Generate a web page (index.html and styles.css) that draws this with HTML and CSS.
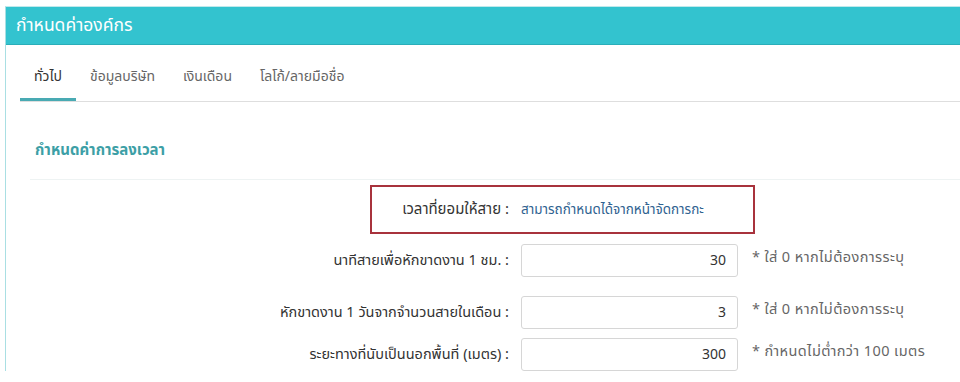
FILE: index.html
```html
<!DOCTYPE html>
<html lang="th">
<head>
<meta charset="utf-8">
<title>กำหนดค่าองค์กร</title>
<link rel="stylesheet" href="styles.css">
</head>
<body>
<div class="panel">
  <div class="panel-head">กำหนดค่าองค์กร</div>
  <div class="panel-body">
    <ul class="tabs">
      <li class="tab active">ทั่วไป</li>
      <li class="tab">ข้อมูลบริษัท</li>
      <li class="tab">เงินเดือน</li>
      <li class="tab">โลโก้/ลายมือชื่อ</li>
    </ul>
    <div class="section-title">กำหนดค่าการลงเวลา</div>
    <div class="form">
      <div class="row row-static">
        <div class="label">เวลาที่ยอมให้สาย :</div>
        <div class="value">สามารถกำหนดได้จากหน้าจัดการกะ</div>
        <div class="annot"></div>
      </div>
      <div class="row row-1">
        <div class="label">นาทีสายเพื่อหักขาดงาน 1 ชม. :</div>
        <div class="input">30</div>
        <div class="hint">* ใส่ 0 หากไม่ต้องการระบุ</div>
      </div>
      <div class="row row-2">
        <div class="label">หักขาดงาน 1 วันจากจำนวนสายในเดือน :</div>
        <div class="input">3</div>
        <div class="hint">* ใส่ 0 หากไม่ต้องการระบุ</div>
      </div>
      <div class="row row-3">
        <div class="label">ระยะทางที่นับเป็นนอกพื้นที่ (เมตร) :</div>
        <div class="input">300</div>
        <div class="hint">* กำหนดไม่ต่ำกว่า 100 เมตร</div>
      </div>
    </div>
  </div>
</div>
</body>
</html>
```

FILE: styles.css
```css
* { box-sizing: border-box; }
html, body {
  margin: 0;
  padding: 0;
  background: #ffffff;
  font-family: "Noto Sans Thai", "Noto Sans", "DejaVu Sans", sans-serif;
  color: #333;
}
.panel {
  margin: 6px 0 0 5px;
  border-left: 1px solid #a9dfe3;
  border-top: 1px solid #bfe9ec;
}
.panel-head {
  height: 38px;
  background: #33c3cf;
  border-bottom: 1px solid #2aaeb9;
  color: #fff;
  font-size: 17.5px;
  line-height: 37px;
  padding-left: 10px;
}
.panel-body {
  padding: 10px 0 0 14px;
}
.tabs {
  display: flex;
  margin: 0;
  padding: 0;
  list-style: none;
  border-bottom: 1px solid #dedede;
}
.tab {
  padding: 0 14px;
  height: 46px;
  line-height: 44px;
  font-size: 14px;
  color: #666;
}
.tab.active {
  color: #333;
  border-bottom: 3px solid #49aab3;
  margin-bottom: -1px;
}
.section-title {
  margin: 0 0 0 10px;
  padding: 39px 0 18px 5px;
  line-height: 20px;
  font-size: 15px;
  font-weight: bold;
  color: #3d9fa6;
  border-bottom: 1px solid #eef3f3;
}
.form {
  padding-top: 5px;
  margin-left: -14px;
}
.row {
  display: grid;
  grid-template-columns: 503px 217px auto;
  column-gap: 12px;
  align-items: center;
  position: relative;
}
.row .label {
  text-align: right;
  font-size: 14.5px;
  color: #333;
}
.row-static {
  height: 49px;
}
.row-static .label {
  font-size: 15px;
}
.row-static .value {
  grid-column: 2 / 4;
  font-size: 13.5px;
  color: #2f6290;
}
.annot {
  position: absolute;
  left: 364px;
  width: 385px;
  top: 0;
  bottom: 0;
  border: 2px solid #a8323c;
}
.row-1 { margin-top: 10px; }
.row-2 { margin-top: 19px; }
.row-3 { margin-top: 9px; }
.input {
  height: 33px;
  border: 1px solid #d6d6d6;
  border-radius: 3px;
  text-align: right;
  padding: 0 11px;
  line-height: 31px;
  font-size: 14px;
  color: #333;
}
.hint {
  font-size: 14.5px;
  letter-spacing: 0.4px;
  color: #666;
  padding-left: 2px;
  margin-top: -6px;
}
```
